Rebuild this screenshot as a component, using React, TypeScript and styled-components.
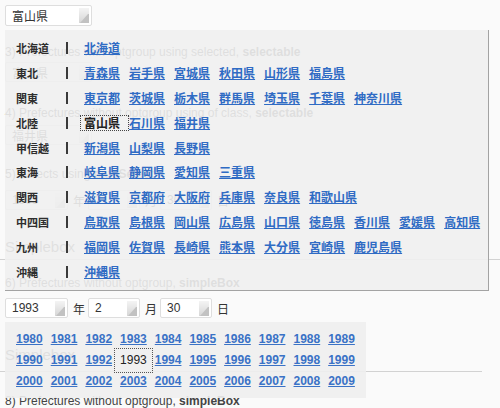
import React from "react";
import styled, { createGlobalStyle } from "styled-components";

const GlobalStyle = createGlobalStyle`
  html, body {
    margin: 0;
    background: #fafafa;
  }
  body {
    font-family: "Liberation Sans", Arial, "Noto Sans CJK JP", sans-serif;
    font-size: 12px;
    color: #3a3a3a;
  }
`;

const JP = `"Noto Sans CJK JP", "Liberation Sans", sans-serif`;

const Page = styled.div`
  position: relative;
  width: 500px;
  height: 408px;
  overflow: hidden;
  padding: 5px 5px 0;
  box-sizing: border-box;
`;

const Select = styled.div<{ $w: number; $h?: number; $mt?: number }>`
  display: flex;
  align-items: center;
  justify-content: space-between;
  width: ${(p) => p.$w}px;
  height: ${(p) => p.$h ?? 20}px;
  margin-top: ${(p) => p.$mt ?? 0}px;
  box-sizing: border-box;
  padding: 0 2px 0 6px;
  background: #fff;
  border: 1px solid #dedede;
  border-radius: 2px;
  font-family: ${JP};
  font-size: 12px;
  color: #333;
`;

const Num = styled.span`
  font-family: "Liberation Sans", Arial, sans-serif;
`;

const DateRow = styled.div<{ $mt: number }>`
  display: flex;
  align-items: center;
  margin-top: ${(p) => p.$mt}px;
  height: 20px;
`;

const DateUnit = styled.span`
  margin: 0 3px 0 5px;
  font-family: ${JP};
  font-size: 12px;
  color: #333;
`;

const Heading = styled.p<{ $mt: number }>`
  margin: ${(p) => p.$mt}px 0 0;
  line-height: 16px;
  font-size: 12px;
  color: #444;
  white-space: nowrap;
`;

const Title = styled.h3<{ $mt: number }>`
  margin: ${(p) => p.$mt}px 0 0;
  line-height: 18px;
  font-size: 15px;
  font-weight: normal;
  color: #555;
`;

const Rule = styled.hr<{ $mt: number; $w: number }>`
  margin: ${(p) => p.$mt}px 0 0 -5px;
  width: ${(p) => p.$w}px;
  height: 0;
  border: 0;
  border-top: 1px solid #d2d2d2;
`;

/* prefecture dropdown */
const Menu = styled.div`
  position: absolute;
  left: 5px;
  top: 30px;
  width: 484px;
  box-sizing: border-box;
  padding: 6px 0 6px 11px;
  background: rgba(239, 239, 239, 0.9);
  border-right: 1px solid #a3a3a3;
  border-bottom: 1px solid #a3a3a3;
`;

const Group = styled.div`
  display: grid;
  grid-template-columns: 50px 2px 1fr;
  align-items: center;
  height: 24.8px;
`;

const GroupLabel = styled.span`
  font-family: ${JP};
  font-size: 11px;
  font-weight: bold;
  color: #2e2e2e;
`;

const Bar = styled.span`
  display: block;
  height: 12px;
  border-left: 2px solid #3a3a3a;
`;

const Options = styled.div`
  display: flex;
  margin-left: 12px;
`;

const Option = styled.a<{ $selected?: boolean }>`
  display: block;
  padding: ${(p) => (p.$selected ? "0 8px 0 3px" : "0 4px 0 3px")};
  margin-right: ${(p) => (p.$selected ? "-4px" : "0")};
  border: 1px dotted ${(p) => (p.$selected ? "#444" : "transparent")};
  line-height: 14px;
  font-family: ${JP};
  font-size: 12px;
  font-weight: bold;
  white-space: nowrap;
  color: ${(p) => (p.$selected ? "#222" : "#2f6bc4")};
  text-decoration: ${(p) => (p.$selected ? "none" : "underline")};
`;

/* year dropdown */
const YearMenu = styled.div`
  position: absolute;
  left: 5px;
  top: 322px;
  width: 361px;
  height: 76px;
  box-sizing: border-box;
  padding: 7px 3px 0 7px;
  background: rgba(238, 238, 238, 0.9);
  display: grid;
  grid-template-columns: repeat(10, 34.7px);
  grid-auto-rows: 21px;
`;

const Year = styled.a<{ $selected?: boolean }>`
  padding-left: 4px;
  line-height: 21px;
  font-size: 12px;
  font-weight: ${(p) => (p.$selected ? "normal" : "bold")};
  color: ${(p) => (p.$selected ? "#222" : "#3a72c6")};
  text-decoration: ${(p) => (p.$selected ? "none" : "underline")};
  outline: ${(p) => (p.$selected ? "1px dotted #555" : "none")};
  outline-offset: 1px;
`;

const Arrow = () => (
  <svg width="10" height="15" viewBox="0 0 10 15">
    <defs>
      <linearGradient id="arw" x1="0" y1="0" x2="0" y2="1">
        <stop offset="0" stopColor="#f4f4f4" />
        <stop offset="1" stopColor="#d6d6d6" />
      </linearGradient>
    </defs>
    <rect x="0" y="0" width="10" height="15" fill="url(#arw)" />
    <path d="M1 15 L9 6 L10 6 L10 15 Z" fill="#c2c2c2" />
  </svg>
);

const groups: [string, string[]][] = [
  ["北海道", ["北海道"]],
  ["東北", ["青森県", "岩手県", "宮城県", "秋田県", "山形県", "福島県"]],
  ["関東", ["東京都", "茨城県", "栃木県", "群馬県", "埼玉県", "千葉県", "神奈川県"]],
  ["北陸", ["富山県", "石川県", "福井県"]],
  ["甲信越", ["新潟県", "山梨県", "長野県"]],
  ["東海", ["岐阜県", "静岡県", "愛知県", "三重県"]],
  ["関西", ["滋賀県", "京都府", "大阪府", "兵庫県", "奈良県", "和歌山県"]],
  ["中四国", ["鳥取県", "島根県", "岡山県", "広島県", "山口県", "徳島県", "香川県", "愛媛県", "高知県"]],
  ["九州", ["福岡県", "佐賀県", "長崎県", "熊本県", "大分県", "宮崎県", "鹿児島県"]],
  ["沖縄", ["沖縄県"]],
];

const years = Array.from({ length: 30 }, (_, i) => 1980 + i);

const DateSelects: React.FC<{ mt: number }> = ({ mt }) => (
  <DateRow $mt={mt}>
    <Select $w={63}>
      <Num>1993</Num>
      <Arrow />
    </Select>
    <DateUnit>年</DateUnit>
    <Select $w={52}>
      <Num>2</Num>
      <Arrow />
    </Select>
    <DateUnit>月</DateUnit>
    <Select $w={52}>
      <Num>30</Num>
      <Arrow />
    </Select>
    <DateUnit>日</DateUnit>
  </DateRow>
);

export default function App() {
  return (
    <>
      <GlobalStyle />
      <Page>
        <Select $w={87} $h={21}>
          <span>富山県</span>
          <Arrow />
        </Select>

        <Heading $mt={18}>
          3) Prefectures with optgroup using selected, <b>selectable</b>
        </Heading>
        <Select $w={87} $mt={2}>
          <span>富山県</span>
          <Arrow />
        </Select>

        <Heading $mt={23}>
          4) Prefectures without optgroup using of class, <b>selectable</b>
        </Heading>
        <Select $w={87} $mt={4}>
          <span>福井県</span>
          <Arrow />
        </Select>

        <Heading $mt={21}>
          5) Selects using <b>dateSelect</b>
        </Heading>
        <DateSelects mt={8} />

        <Title $mt={28}>Simplebox</Title>
        <Rule $mt={3} $w={500} />

        <Heading $mt={15}>
          6) Prefectures without optgroup, <b>simpleBox</b>
        </Heading>
        <DateSelects mt={7} />

        <Title $mt={28}>Simplebox</Title>
        <Rule $mt={7} $w={482} />

        <Heading $mt={21}>
          8) Prefectures without optgroup, <b>simpleBox</b>
        </Heading>

        <Menu>
          {groups.map(([label, prefs]) => (
            <Group key={label}>
              <GroupLabel>{label}</GroupLabel>
              <Bar />
              <Options>
                {prefs.map((name) => (
                  <Option key={name} $selected={name === "富山県"}>
                    {name}
                  </Option>
                ))}
              </Options>
            </Group>
          ))}
        </Menu>

        <YearMenu>
          {years.map((y) => (
            <Year key={y} $selected={y === 1993}>
              {y}
            </Year>
          ))}
        </YearMenu>
      </Page>
    </>
  );
}
